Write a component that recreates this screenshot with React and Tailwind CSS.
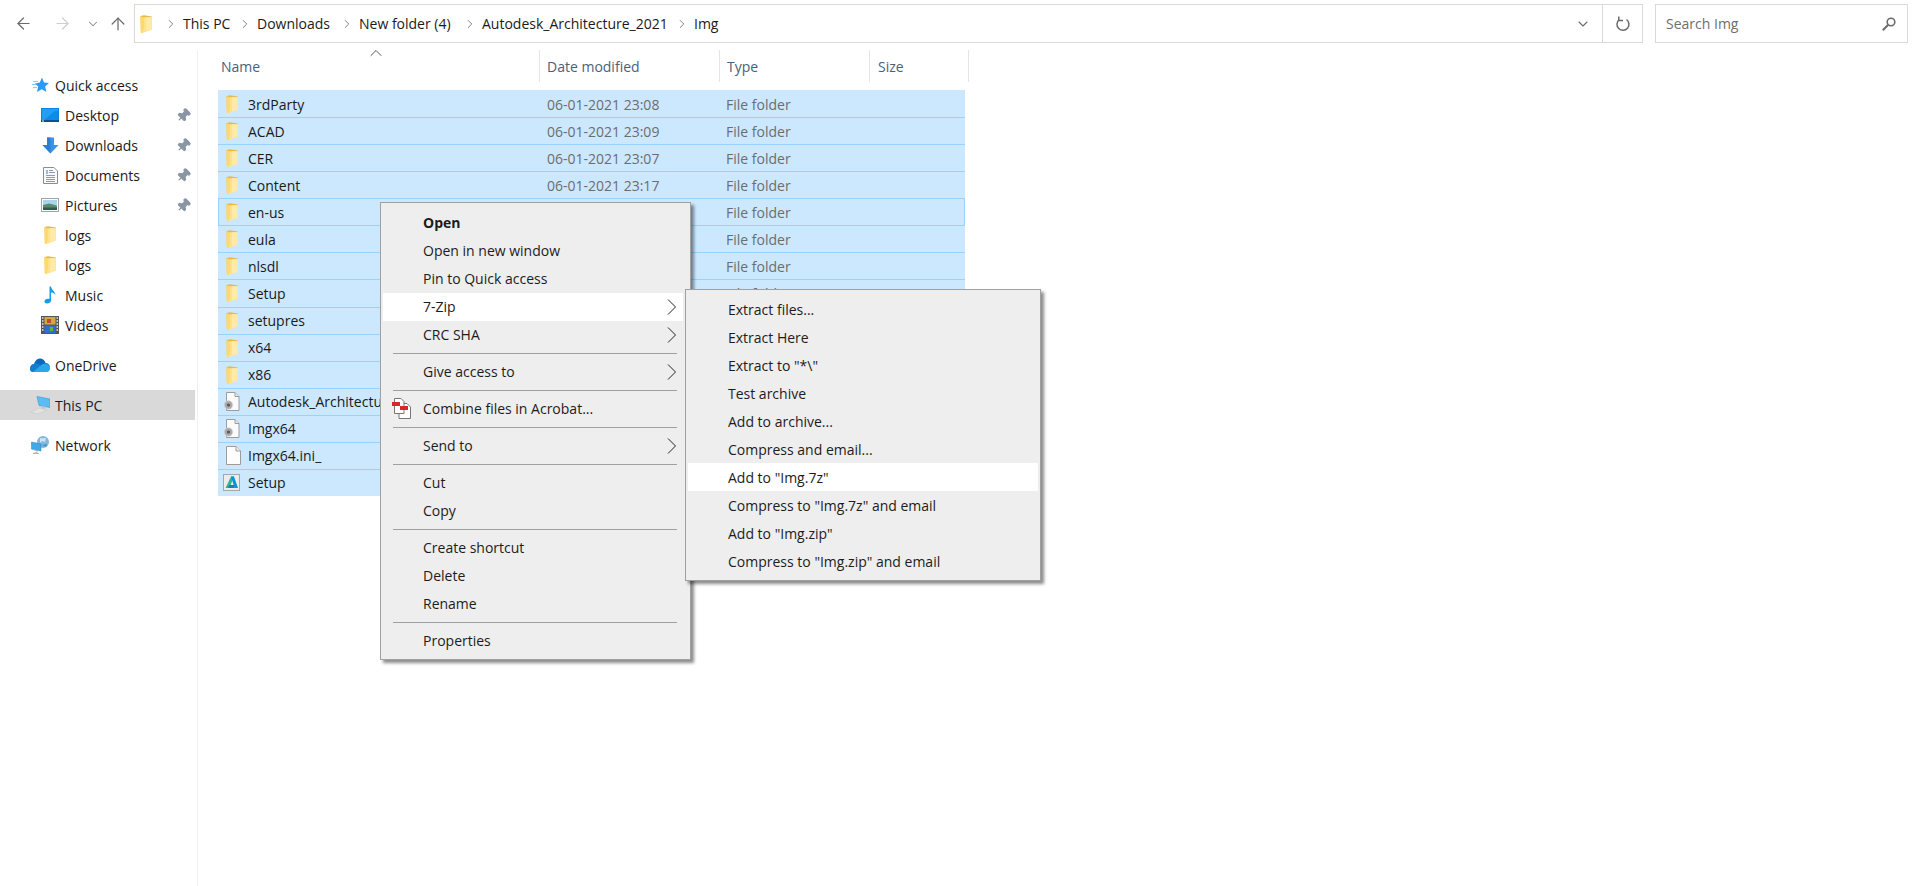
import { ChevronDown, ChevronRight, ArrowLeft, ArrowRight, ArrowUp, Pin } from 'lucide-react'

function FolderIcon() {
  return (
    <svg viewBox="0 0 12 18" className="w-[12px] h-[18px]">
      <path d="M0.5 1 L4 0.3 L11.8 1.5 L11.8 14.8 L3 14.8 L1 16 Z" fill="#e9b949" />
      <path d="M3.2 2.2 L11.8 2.2 L11.8 14.8 L3.2 17.8 Z" fill="#ffe28a" />
      <path d="M6 2.2 L11.8 2.2 L11.8 14.8 L6 16.2 Z" fill="#ffeaa8" />
      <path d="M0.5 1.2 L3.2 2.2 L3.2 17.8 L1 18 L0.5 16 Z" fill="#ffd86f" />
    </svg>
  )
}

function StarIcon() {
  return (
    <svg viewBox="0 0 17 16" className="w-[17px] h-[16px]">
      <path d="M10 0.5 L12 5.5 L16.8 6 L13.2 9.5 L14.3 15 L9.8 12.2 L5 15 L6.2 9.6 L3 6.5 L7.8 5.6 Z" fill="#2b9af3" />
      <path d="M1 4.5 H6 M0 7.5 H4 M1 10.5 H5" stroke="#8ccbf7" strokeWidth="1" />
    </svg>
  )
}

function DesktopIcon() {
  return (
    <svg viewBox="0 0 18 14" className="w-[18px] h-[14px]">
      <rect x="0" y="0" width="18" height="14" fill="#0a84e0" />
      <path d="M1 1 H17 V12 H1 Z" fill="#1fa0f4" />
      <path d="M3 12 L14 3 L17 3 V12 Z" fill="#0d8ce6" />
      <rect x="0" y="12" width="18" height="2" fill="#0b4f8c" />
      <rect x="1" y="12.5" width="2" height="1" fill="#dfefff" />
    </svg>
  )
}

function DownloadIcon() {
  return (
    <svg viewBox="0 0 17 17" className="w-[17px] h-[17px]">
      <path d="M5 0.5 H12 V8 H16.5 L8.5 16.5 L0.5 8 H5 Z" fill="#3b94e8" />
      <path d="M5 0.5 H8.5 V16.5 L0.5 8 H5 Z" fill="#2a7fd4" />
    </svg>
  )
}

function DocumentsIcon() {
  return (
    <svg viewBox="0 0 15 17" className="w-[15px] h-[17px]">
      <path d="M0.5 0.5 H11 L14.5 4 V16.5 H0.5 Z" fill="#fafafa" stroke="#8d8d8d" />
      <path d="M3 4 H5 M3 6 H5" stroke="#2f7dc8" strokeWidth="1" />
      <path d="M6 3.5 H10 M6 5.5 H12 M3 8.5 H12 M3 10.5 H12 M3 12.5 H12 M3 14.5 H12" stroke="#8a9bb0" strokeWidth="1" />
    </svg>
  )
}

function PicturesIcon() {
  return (
    <svg viewBox="0 0 18 14" className="w-[18px] h-[14px]">
      <rect x="0.5" y="0.5" width="17" height="13" fill="#fff" stroke="#a3a3a3" />
      <rect x="2" y="2" width="14" height="5" fill="#a9d4ee" />
      <path d="M2 7 L8 5.5 L16 7.5 V12 H2 Z" fill="#5d8a6d" />
      <path d="M2 9.5 H16 V12 H2 Z" fill="#2f5a4c" />
    </svg>
  )
}

function MusicIcon() {
  return (
    <svg viewBox="0 0 12 18" className="w-[12px] h-[18px]">
      <path d="M5.5 0.5 H7 C7.5 4 11 5 11.5 9 C10 7 8.5 6.5 7 6.5 V14.5 C7 16.5 5 17.5 3 17.5 C1.5 17.5 0.5 16.5 0.5 15.2 C0.5 13.5 3 12.3 5.5 13 Z" fill="#1a9be8" />
    </svg>
  )
}

function VideosIcon() {
  return (
    <svg viewBox="0 0 18 18" className="w-[18px] h-[18px]">
      <rect x="0" y="0" width="18" height="18" fill="#555" />
      <rect x="3.5" y="1" width="11" height="7.5" fill="#d8a83a" />
      <rect x="3.5" y="9.5" width="11" height="7.5" fill="#2f6fd0" />
      <rect x="6" y="3" width="4" height="4" fill="#c8443c" />
      <rect x="9" y="11" width="3" height="4" fill="#6cae46" />
      <path d="M1 2 H2.5 M1 5 H2.5 M1 8 H2.5 M1 11 H2.5 M1 14 H2.5 M15.5 2 H17 M15.5 5 H17 M15.5 8 H17 M15.5 11 H17 M15.5 14 H17" stroke="#e6e6e6" strokeWidth="1.4" />
    </svg>
  )
}

function OneDriveIcon() {
  return (
    <svg viewBox="0 0 20 14" className="w-[20px] h-[14px]">
      <path d="M4 6 C5 2 8 0 11 0.5 C13.5 1 15 3 15.5 5 C18 5 20 7 20 9.5 L8 10 Z" fill="#0a68bd" />
      <path d="M0 10.5 C0 8 2 6 4.5 6 C7 5 9 6.5 10 8 C12 6 15 5 17 6 C19 6.5 20 8.5 20 10.5 C20 12.5 18.5 14 17 14 H3 C1 14 0 12.5 0 10.5 Z" fill="#28a8ea" />
      <path d="M0 10.5 C0 8 2 6 4.5 6 C7 5 9 6.5 10 8 L3 14 C1 14 0 12.5 0 10.5 Z" fill="#0f7fd0" />
    </svg>
  )
}

function ThisPcIcon() {
  return (
    <svg viewBox="0 0 20 18" className="w-[20px] h-[18px]">
      <path d="M7 0.5 L20 3 V11.5 L9 9.5 Z" fill="#5cbdf2" stroke="#3a9ad6" strokeWidth="0.6" />
      <path d="M12 10 L15 10.5 L15 13 L11 12.5 Z" fill="#c3c3c3" />
      <path d="M0.5 16 L9 12 L17 14 L8 18 Z" fill="#e2e2e2" stroke="#c4c4c4" strokeWidth="0.5" />
    </svg>
  )
}

function NetworkIcon() {
  return (
    <svg viewBox="0 0 18 18" className="w-[18px] h-[18px]">
      <circle cx="12" cy="6" r="6" fill="#7fb7dd" />
      <path d="M9 2 C11 3 13 1.5 15 2 L14 6 L11 5 L9 7 Z" fill="#d2e4ef" />
      <path d="M11 9 L16 8 L15 11 Z" fill="#4a8fc2" />
      <path d="M0.5 6 L10 8 V15 L0.5 13 Z" fill="#3fa9ea" stroke="#2d7fb8" strokeWidth="0.5" />
      <path d="M3 14 L6 14.5 V16.5 L2 17.5 H8" stroke="#b3b3b3" strokeWidth="1" fill="none" />
    </svg>
  )
}

function SetupFileIcon() {
  return (
    <svg viewBox="0 0 17 19" className="w-[17px] h-[19px]">
      <path d="M3.5 0.5 H12 L16 4.5 V18.5 H3.5 Z" fill="#fbfbfb" stroke="#9c9c9c" />
      <path d="M12 0.5 V4.5 H16" fill="#e8e8e8" stroke="#9c9c9c" />
      <circle cx="5.5" cy="13" r="4.2" fill="#a9a9a9" stroke="#d8d8d8" strokeDasharray="1.4 1" />
      <circle cx="5.5" cy="13" r="1.6" fill="#555" />
    </svg>
  )
}

function BlankFileIcon() {
  return (
    <svg viewBox="0 0 15 19" className="w-[15px] h-[19px]">
      <path d="M0.5 0.5 H10 L14.5 5 V18.5 H0.5 Z" fill="#fdfdfd" stroke="#9c9c9c" />
      <path d="M10 0.5 V5 H14.5" fill="#efefef" stroke="#9c9c9c" />
    </svg>
  )
}

function AutodeskIcon() {
  return (
    <svg viewBox="0 0 17 17" className="w-[17px] h-[17px]">
      <rect x="0.5" y="0.5" width="16" height="16" fill="#ececec" stroke="#a6a6a6" />
      <path d="M2.5 14 L8 2.5 H11 L6.5 14 Z" fill="#35b38a" />
      <path d="M8 2.5 H11 L15 14 H11.5 Z" fill="#0696d7" />
      <path d="M6 11 H11 L11.5 14 H5 Z" fill="#1f7fa8" />
    </svg>
  )
}

function AcrobatIcon() {
  return (
    <svg viewBox="0 0 20 21" className="w-[20px] h-[21px]">
      <path d="M7 5.5 H15 L18.5 9 V20.5 H7 Z" fill="#fff" stroke="#777" />
      <path d="M2.5 0.5 H9 L12 3.5 V15.5 H2.5 Z" fill="#fff" stroke="#777" />
      <rect x="0" y="4" width="8" height="4" fill="#d9262b" />
      <rect x="8" y="8" width="8" height="4" fill="#d9262b" />
    </svg>
  )
}

function SubmenuArrow() {
  return (
    <svg viewBox="0 0 10 16" className="w-[10px] h-[16px] mr-[6px] shrink-0">
      <path d="M1 0.5 L8.5 8 L1 15.5" fill="none" stroke="#222" strokeWidth="1" />
    </svg>
  )
}

function RefreshIcon() {
  return (
    <svg viewBox="0 0 16 16" className="w-[16px] h-[16px]">
      <path d="M11.5 3.5 A6 6 0 1 1 4 3.8" fill="none" stroke="#6b6b6b" strokeWidth="1.5" />
      <path d="M3.8 0.5 V4.5 H8" fill="none" stroke="#6b6b6b" strokeWidth="1.5" />
    </svg>
  )
}

function SearchIcon() {
  return (
    <svg viewBox="0 0 14 14" className="w-[14px] h-[14px]">
      <circle cx="9" cy="5" r="3.8" fill="none" stroke="#6b6b6b" strokeWidth="1.6" />
      <path d="M6.2 7.8 L0.8 13.2" stroke="#6b6b6b" strokeWidth="2" />
    </svg>
  )
}

const sidebarTop = [
  { label: 'Desktop', icon: <DesktopIcon />, pinned: true },
  { label: 'Downloads', icon: <DownloadIcon />, pinned: true },
  { label: 'Documents', icon: <DocumentsIcon />, pinned: true },
  { label: 'Pictures', icon: <PicturesIcon />, pinned: true },
  { label: 'logs', icon: <FolderIcon /> },
  { label: 'logs', icon: <FolderIcon /> },
  { label: 'Music', icon: <MusicIcon /> },
  { label: 'Videos', icon: <VideosIcon /> },
]

const files = [
  { name: '3rdParty', date: '06-01-2021 23:08', type: 'File folder' },
  { name: 'ACAD', date: '06-01-2021 23:09', type: 'File folder' },
  { name: 'CER', date: '06-01-2021 23:07', type: 'File folder' },
  { name: 'Content', date: '06-01-2021 23:17', type: 'File folder' },
  { name: 'en-us', type: 'File folder', focused: true },
  { name: 'eula', type: 'File folder' },
  { name: 'nlsdl', type: 'File folder' },
  { name: 'Setup', type: 'File folder' },
  { name: 'setupres' },
  { name: 'x64' },
  { name: 'x86' },
  { name: 'Autodesk_Architecture', icon: <SetupFileIcon />, wideIcon: true },
  { name: 'Imgx64', icon: <SetupFileIcon />, wideIcon: true },
  { name: 'Imgx64.ini_', icon: <BlankFileIcon /> },
  { name: 'Setup', icon: <AutodeskIcon />, wideIcon: true },
]

const crumbs = [
  { label: 'This PC', className: 'w-[55px]' },
  { label: 'Downloads', className: 'w-[83px]' },
  { label: 'New folder (4)', className: 'w-[104px]' },
  { label: 'Autodesk_Architecture_2021', className: 'w-[193px]' },
  { label: 'Img', className: 'w-[30px]' },
]

function NavRow({ icon, label, indent, pinned, active }) {
  return (
    <div className={`flex items-center h-[30px] ${active ? 'bg-[#d9d9d9]' : ''}`}>
      <div className={`flex items-center justify-center shrink-0 h-full ${indent ? 'ml-[41px] w-[18px] mr-[6px]' : 'ml-[30px] w-[20px] mr-[5px]'}`}>
        {icon}
      </div>
      <span className="flex-1 text-[#1a1a1a]">{label}</span>
      {pinned && <Pin size={15} className="mr-[4px] rotate-45 text-[#8a96a3] fill-[#8a96a3]" />}
    </div>
  )
}

function MenuItem({ label, bold, arrow, hot, icon }) {
  return (
    <div className={`flex items-center h-[28px] ${hot ? 'bg-white' : ''}`}>
      <div className="w-[40px] pl-[9px] shrink-0 flex items-center">{icon}</div>
      <span className={`flex-1 text-[#1c1c1c] ${bold ? 'font-bold' : ''}`}>{label}</span>
      {arrow && <SubmenuArrow />}
    </div>
  )
}

function MenuSeparator() {
  return <div className="h-px bg-[#a0a0a0] my-[4px] ml-[10px] mr-[6px]" />
}

export default function App() {
  return (
    <div className="relative h-[886px] overflow-hidden bg-white text-[14px] font-['Open_Sans',sans-serif]">
      <div className="flex items-center h-[47px] mb-[3px]">
        <ArrowLeft size={19} strokeWidth={1.5} className="ml-[14px] text-[#6b6b6b]" />
        <ArrowRight size={19} strokeWidth={1.5} className="ml-[20px] text-[#cfcfcf]" />
        <ChevronDown size={14} strokeWidth={1.8} className="ml-[14px] text-[#8a8a8a]" />
        <ArrowUp size={20} strokeWidth={1.5} className="ml-[8px] mr-[6px] text-[#6b6b6b]" />
        <div className="flex items-center w-[1509px] h-[39px] border border-[#d9d9d9]">
          <div className="ml-[5px] mr-[12px] flex items-center">
            <FolderIcon />
          </div>
          {crumbs.map((c) => (
            <div key={c.label} className="flex items-center">
              <ChevronRight size={14} strokeWidth={1.5} className="text-[#6e6e6e] mr-[5px]" />
              <span className={`${c.className} text-[#1a1a1a] whitespace-nowrap`}>{c.label}</span>
            </div>
          ))}
          <div className="flex-1" />
          <ChevronDown size={16} strokeWidth={1.6} className="mr-[11px] text-[#6b6b6b]" />
          <div className="flex items-center justify-center w-[40px] h-full border-l border-[#d9d9d9]">
            <RefreshIcon />
          </div>
        </div>
        <div className="flex items-center justify-between w-[253px] h-[39px] ml-[12px] pl-[10px] pr-[11px] border border-[#d9d9d9]">
          <span className="text-[#6e6e6e]">Search Img</span>
          <SearchIcon />
        </div>
      </div>

      <div className="flex h-[836px]">
        <div className="w-[198px] shrink-0 pt-[20px] pr-[2px] border-r border-[#f0f0f0]">
          <NavRow icon={<StarIcon />} label="Quick access" />
          {sidebarTop.map((item, i) => (
            <NavRow key={i} icon={item.icon} label={item.label} pinned={item.pinned} indent />
          ))}
          <div className="h-[10px]" />
          <NavRow icon={<OneDriveIcon />} label="OneDrive" />
          <div className="h-[10px]" />
          <NavRow icon={<ThisPcIcon />} label="This PC" active />
          <div className="h-[10px]" />
          <NavRow icon={<NetworkIcon />} label="Network" />
        </div>

        <div className="pl-[20px]">
          <div className="flex h-[32px] text-[#4c607a]">
            <div className="relative w-[322px] pl-[3px] flex items-center border-r border-[#e5e5e5]">
              Name
              <ChevronDown size={20} strokeWidth={1.2} className="absolute left-[148px] -top-[7px] rotate-180 text-[#555]" />
            </div>
            <div className="w-[180px] pl-[7px] flex items-center border-r border-[#e5e5e5]">Date modified</div>
            <div className="w-[150px] pl-[7px] flex items-center border-r border-[#e5e5e5]">Type</div>
            <div className="w-[99px] pl-[8px] flex items-center border-r border-[#e5e5e5]">Size</div>
          </div>
          <div className="mt-[8px] w-[747px]">
            {files.map((f, i) => (
              <div
                key={i}
                className={`flex items-center h-[27.07px] bg-[#cce8ff] border-t first:border-t-[#cce8ff] border-[#99d1ff] ${f.focused ? 'border-x' : ''}`}
              >
                <div className={`${f.focused ? 'w-[29px] pl-[7px]' : f.wideIcon ? 'w-[30px] pl-[5px]' : 'w-[30px] pl-[8px]'} shrink-0 flex items-center`}>
                  {f.icon || <FolderIcon />}
                </div>
                <span className="w-[299px] shrink-0 whitespace-nowrap text-[#1a1a1a]">{f.name}</span>
                <span className="w-[179px] shrink-0 text-[#6d6d6d]">{f.date}</span>
                <span className="text-[#6d6d6d]">{f.type}</span>
              </div>
            ))}
          </div>
        </div>
      </div>

      <div className="absolute left-[380px] top-[202px] w-[311px] bg-[#eeeeee] border border-[#a0a0a0] pt-[5.5px] pb-[4px] pl-[2px] pr-[7px] shadow-[3px_3px_3px_rgba(0,0,0,0.45)]">
        <MenuItem label="Open" bold />
        <MenuItem label="Open in new window" />
        <MenuItem label="Pin to Quick access" />
        <MenuItem label="7-Zip" arrow hot />
        <MenuItem label="CRC SHA" arrow />
        <MenuSeparator />
        <MenuItem label="Give access to" arrow />
        <MenuSeparator />
        <MenuItem label="Combine files in Acrobat..." icon={<AcrobatIcon />} />
        <MenuSeparator />
        <MenuItem label="Send to" arrow />
        <MenuSeparator />
        <MenuItem label="Cut" />
        <MenuItem label="Copy" />
        <MenuSeparator />
        <MenuItem label="Create shortcut" />
        <MenuItem label="Delete" />
        <MenuItem label="Rename" />
        <MenuSeparator />
        <MenuItem label="Properties" />
      </div>

      <div className="absolute left-[685px] top-[289px] w-[356px] bg-[#eeeeee] border border-[#a0a0a0] py-[5px] px-[2px] shadow-[3px_3px_3px_rgba(0,0,0,0.45)]">
        <MenuItem label="Extract files..." />
        <MenuItem label="Extract Here" />
        <MenuItem label={'Extract to "*\\"'} />
        <MenuItem label="Test archive" />
        <MenuItem label="Add to archive..." />
        <MenuItem label="Compress and email..." />
        <MenuItem label={'Add to "Img.7z"'} hot />
        <MenuItem label={'Compress to "Img.7z" and email'} />
        <MenuItem label={'Add to "Img.zip"'} />
        <MenuItem label={'Compress to "Img.zip" and email'} />
      </div>
    </div>
  )
}
